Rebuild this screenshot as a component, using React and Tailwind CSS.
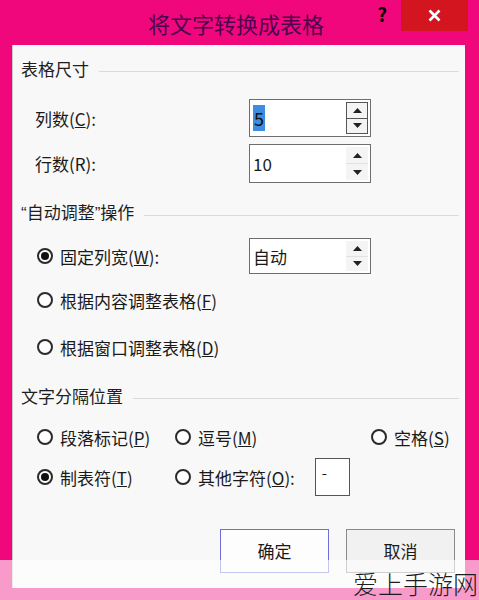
import React from 'react';

const font = { fontFamily: '"Noto Sans CJK SC", "Noto Sans", sans-serif' };

const GroupLabel = ({ children }) => (
  <div className="flex items-center h-[30px] pl-[8px] pr-[6px]">
    <span className="text-[17px] text-[#1e1e1e] leading-none whitespace-nowrap">{children}</span>
    <div className="flex-1 h-px bg-[#dadada] ml-[10px] mt-[6px]" />
  </div>
);

const Arrow = ({ up }) => (
  <svg width="9" height="5" viewBox="0 0 9 5">
    {up ? <path d="M0 5 L4.5 0 L9 5 Z" fill="#222" /> : <path d="M0 0 L4.5 5 L9 0 Z" fill="#222" />}
  </svg>
);

const SpinBox = ({ value, focused, h = 38 }) => (
  <div
    className={`w-[122px] shrink-0 border-[1.5px] border-[#6e6e6e] bg-white flex items-stretch ${h === 36 ? 'h-[36px]' : h === 39 ? 'h-[39px]' : 'h-[38px]'}`}
  >
    <div className="flex-1 flex items-center pl-[3px]">
      {focused ? (
        <span className="bg-[#3d8ee0] text-[#111] text-[18px] leading-[26px] px-px">{value}</span>
      ) : (
        <span className="text-[#1a1a1a] text-[17px] leading-none">{value}</span>
      )}
    </div>
    <div className="w-[22px] flex flex-col my-[2px] mr-[2px]">
      <div className={`flex-1 flex items-center justify-center ${focused ? 'border border-[#555] bg-[#f4f4f4]' : 'bg-[#f4f4f4]'}`}>
        <Arrow up />
      </div>
      <div className={`flex-1 flex items-center justify-center ${focused ? 'border border-t-0 border-[#555] bg-[#f4f4f4]' : 'bg-[#f4f4f4] border-t border-[#e2e2e2]'}`}>
        <Arrow />
      </div>
    </div>
  </div>
);

const Radio = ({ checked, children }) => (
  <div className="flex items-center">
    <div className="w-[16px] h-[16px] shrink-0 rounded-full border-2 border-[#2a2a2a] bg-white flex items-center justify-center">
      {checked && <div className="w-[8px] h-[8px] rounded-full bg-[#111]" />}
    </div>
    <span className="ml-[7px] text-[17px] text-[#1a1a1a] leading-none whitespace-nowrap">{children}</span>
  </div>
);

const Q = ({ children }) => (
  <span style={{ fontFamily: '"Liberation Sans", sans-serif' }}>{children}</span>
);

export default function App() {
  return (
    <div className="w-[479px] h-[600px] bg-[#f1077c] relative overflow-hidden" style={font}>
      {/* title bar */}
      <div className="h-[45px] flex items-start">
        <div className="w-[148px]" />
        <div className="mt-[9px] text-[22px] leading-[28px] whitespace-nowrap text-fuchsia-950">将文字转换成表格</div>
        <div className="flex-1" />
        <div className="mt-[2px] text-[19px] font-bold leading-[24px] text-black">?</div>
        <div className="ml-[14px] w-[67px] h-[31px] bg-[#d3151f] flex items-center justify-center">
          <svg width="13" height="13" viewBox="0 0 13 13">
            <path d="M1.5 1.5 L11.5 11.5 M11.5 1.5 L1.5 11.5" stroke="#fff" strokeWidth="2.6" />
          </svg>
        </div>
        <div className="w-[11px]" />
      </div>

      {/* body */}
      <div className="ml-[12px] w-[453px] h-[543px] bg-[#f8f8f8] border-l border-[#c8c8c8] pt-[8px]">
        <GroupLabel>表格尺寸</GroupLabel>

        <div className="mt-[16px] flex items-center h-[38px]">
          <span className="ml-[22px] w-[214px] text-[17px] text-[#1a1a1a] leading-none">
            列数(<u>C</u>):
          </span>
          <SpinBox value="5" focused />
        </div>
        <div className="mt-[7px] flex items-center h-[39px]">
          <span className="ml-[22px] w-[214px] text-[17px] text-[#1a1a1a] leading-none">行数(R):</span>
          <SpinBox value="10" h={39} />
        </div>

        <div className="mt-[14px]">
          <GroupLabel>
            <Q>“</Q>自动调整<Q>”</Q>操作
          </GroupLabel>
        </div>

        <div className="mt-[11px] flex items-center h-[36px]">
          <div className="ml-[24px] w-[212px]">
            <Radio checked>
              固定列宽(<u>W</u>):
            </Radio>
          </div>
          <SpinBox value="自动" h={36} />
        </div>
        <div className="mt-[11px] h-[30px] flex items-center pl-[24px]">
          <Radio>
            根据内容调整表格(<u>F</u>)
          </Radio>
        </div>
        <div className="mt-[17px] h-[30px] flex items-center pl-[24px]">
          <Radio>
            根据窗口调整表格(<u>D</u>)
          </Radio>
        </div>

        <div className="mt-[18px]">
          <GroupLabel>文字分隔位置</GroupLabel>
        </div>

        <div className="mt-[12px] h-[30px] flex items-center pl-[24px]">
          <div className="w-[138px]">
            <Radio>
              段落标记(<u>P</u>)
            </Radio>
          </div>
          <div className="w-[196px]">
            <Radio>
              逗号(<u>M</u>)
            </Radio>
          </div>
          <Radio>
            空格(<u>S</u>)
          </Radio>
        </div>
        <div className="mt-[6px] h-[38px] flex items-center pl-[24px]">
          <div className="w-[138px]">
            <Radio checked>
              制表符(<u>T</u>)
            </Radio>
          </div>
          <Radio>
            其他字符(<u>O</u>):
          </Radio>
          <div className="ml-[20px] w-[35px] h-[38px] border-[1.5px] border-[#555] bg-white pl-[6px] pt-[6px] text-[15px] text-[#111] leading-none">
            -
          </div>
        </div>

        <div className="mt-[33px] flex h-[44px] pl-[207px] gap-[17px]">
          <div className="w-[109px] h-[44px] border-[1.5px] border-[#6f6fdc] bg-[#fdfdfd] flex items-center justify-center text-[17px] text-[#1a1a1a]">
            确定
          </div>
          <div className="w-[109px] h-[44px] border-[1.5px] border-[#8a8a8a] bg-[#f1f1f1] flex items-center justify-center text-[17px] text-[#1a1a1a]">
            取消
          </div>
        </div>
      </div>

      {/* watermark band */}
      <div className="absolute left-0 right-0 bottom-0 h-[40px] bg-white/60" />
      <div className="absolute right-[1px] bottom-[2px] text-[25px] font-light leading-[30px] text-[#1c1c1c]">
        爱上手游网
      </div>
    </div>
  );
}
